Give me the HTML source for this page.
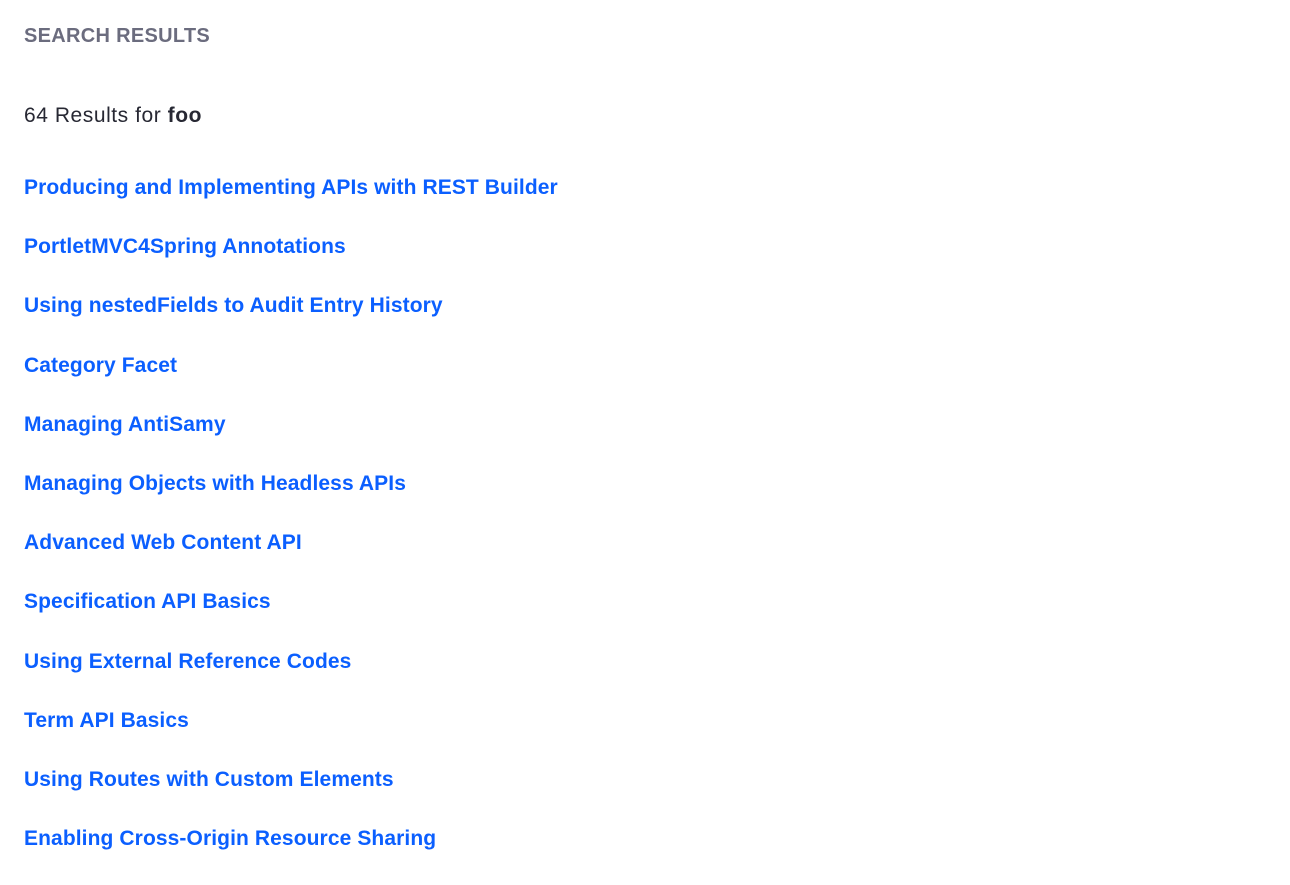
<!DOCTYPE html>
<html><head><style>
body{margin:0;background:#fff;font-family:"Liberation Sans",sans-serif;}
.h{position:absolute;left:24px;top:24px;font-size:20px;font-weight:bold;color:#6b6c7e;line-height:24px;letter-spacing:0.3px;}
.r{position:absolute;left:24px;top:103px;font-size:21px;color:#272833;line-height:26px;letter-spacing:0.55px;}
.r b{color:#272833}
ul{list-style:none;margin:0;padding:0;position:absolute;left:24px;top:175px;}
li{height:59.2px;font-size:21px;font-weight:bold;line-height:26px;letter-spacing:0.1px;}
a{color:#0b5fff;text-decoration:none;}
</style></head><body>
<div class="h">SEARCH RESULTS</div>
<div class="r">64 Results for <b>foo</b></div>
<ul>
<li><a>Producing and Implementing APIs with REST Builder</a></li>
<li><a>PortletMVC4Spring Annotations</a></li>
<li><a>Using nestedFields to Audit Entry History</a></li>
<li><a>Category Facet</a></li>
<li><a>Managing AntiSamy</a></li>
<li><a>Managing Objects with Headless APIs</a></li>
<li><a>Advanced Web Content API</a></li>
<li><a>Specification API Basics</a></li>
<li><a>Using External Reference Codes</a></li>
<li><a>Term API Basics</a></li>
<li><a>Using Routes with Custom Elements</a></li>
<li><a>Enabling Cross-Origin Resource Sharing</a></li>
</ul>
</body></html>
